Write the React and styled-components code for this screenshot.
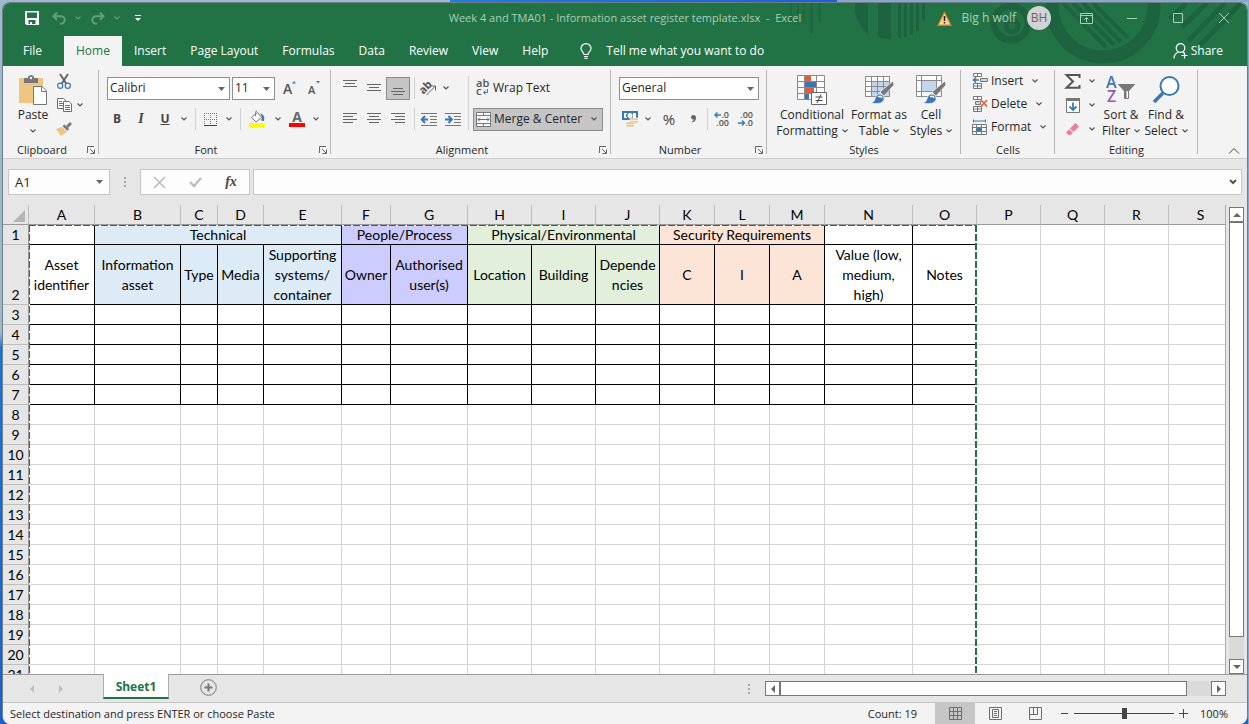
import React, { useState } from 'react'
import styled, { createGlobalStyle, css } from 'styled-components'

const GREEN = '#217346'
const GREY = '#6d6d6d'
const BLUE = '#3a78b5'

const GlobalStyle = createGlobalStyle`
  * {
    box-sizing: border-box;
  }
  body {
    margin: 0;
    font: 12px/16px 'Open Sans', 'Noto Sans', sans-serif;
    color: #262626;
  }
  button, input, select {
    font: inherit;
    color: inherit;
    margin: 0;
    padding: 0;
    border: 0;
    background: none;
    border-radius: 0;
  }
  svg {
    display: block;
    flex: none;
    overflow: visible;
  }
`

const Desktop = styled.div`
  height: 100vh;
  padding: 2px 1px 0 2px;
  background:
    linear-gradient(90deg, #9bb9d1 36%, #1e7be0 36%, #1a5fd8 67%, #86a9cb 67%) top /
      100% 2px no-repeat,
    linear-gradient(#7fa9cf, #7fa9cf) right / 1px 100% no-repeat,
    linear-gradient(#9bb9d1, #9bb9d1 46%, #1673de 48%, #1a5fd0);
`

const Window = styled.div`
  height: 100%;
  display: flex;
  flex-direction: column;
  border: 1px solid #6f7f80;
  border-bottom: 0;
  border-radius: 8px;
  overflow: hidden;
  background: #e6e6e6;
`

/* title bar */

const Header = styled.header`
  position: relative;
  overflow: hidden;
  background: ${GREEN};
  color: #fff;
`

const Pattern = styled.svg`
  position: absolute;
  top: 0;
  right: 0;
`

const TitleBar = styled.div`
  position: relative;
  display: grid;
  grid-template-columns: 1fr auto 1fr;
  align-items: center;
  height: 33px;
  padding-bottom: 3px;
  color: #a8d0b8;
`

const QuickAccess = styled.div`
  display: flex;
  align-items: center;
  padding-left: 16px;
`

const QuickButton = styled.button`
  display: flex;
  align-items: center;
  justify-content: center;
  width: ${(p) => p.$w}px;
  height: 24px;
  opacity: ${(p) => (p.disabled ? 0.3 : 1)};
  color: #fff;
`

const Title = styled.div`
  font-size: 11px;
  white-space: pre;
`

const Account = styled.div`
  display: flex;
  align-items: center;
  justify-content: flex-end;
`

const UserName = styled.span`
  margin: 0 11px 0 10px;
`

const Avatar = styled.span`
  width: 24px;
  height: 24px;
  margin-right: 12px;
  border-radius: 50%;
  background: #d3d3d3;
  color: #666;
  line-height: 24px;
  text-align: center;
`

const WindowButton = styled.button`
  display: flex;
  align-items: center;
  justify-content: center;
  width: 46px;
  height: 28px;
`

const TabBar = styled.nav`
  position: relative;
  display: flex;
  align-items: center;
  height: 30px;
  padding: 0 24px 0 6px;
`

const Tab = styled.button`
  height: 30px;
  padding: 0 12px;
  ${(p) =>
    p.$active &&
    css`
      background: #f3f3f3;
      color: ${GREEN};
    `}
  &:first-child {
    padding: 0 22px 0 14px;
  }
`

const TellMe = styled.button`
  display: flex;
  align-items: center;
  gap: 14px;
  margin-left: 20px;
`

const Share = styled.button`
  display: flex;
  align-items: center;
  gap: 3px;
  margin-left: auto;
`

/* ribbon */

const Ribbon = styled.div`
  display: flex;
  flex: none;
  height: 93px;
  background: #f3f3f3;
  border-bottom: 1px solid #cfcfcf;
`

const GroupBox = styled.section`
  display: flex;
  flex-direction: column;
  width: ${(p) => p.$w}px;
  background: linear-gradient(#b5b5b5, #b5b5b5) no-repeat right 4px / 1px
    calc(100% - 8px);
`

const GroupBody = styled.div`
  display: flex;
  flex: 1;
  padding: 0 ${(p) => p.$pad || 6}px;
`

const GroupFooter = styled.div`
  position: relative;
  padding-right: ${(p) => (p.$launcher ? 18 : 0)}px;
  font-size: 11px;
  text-align: center;
`

const Launcher = styled.button`
  position: absolute;
  right: 4px;
  top: 4px;
`

const Rows = styled.div`
  display: flex;
  flex-direction: column;
  gap: 7px;
  padding-top: 10px;
`

const Row = styled.div`
  display: flex;
  align-items: center;
  height: 24px;
  gap: ${(p) => p.$gap || 0}px;
  padding-left: ${(p) => p.$pad || 0}px;
`

const Stack = styled.div`
  display: flex;
  flex-direction: column;
  padding-top: 3px;
`

const ToolButton = styled.button`
  display: flex;
  align-items: center;
  justify-content: center;
  width: ${(p) => p.$w || 24}px;
  height: 23px;
  color: #444;
  ${(p) =>
    p.$active &&
    css`
      background: #c5c5c5;
      border: 1px solid #8c8c8c;
    `}
`

const Glyph = styled.span`
  font: ${(p) => p.$style || 'normal'} ${(p) => p.$weight || 700}
    ${(p) => p.$size || 12}px/16px ${(p) => p.$family || "'Open Sans'"}, sans-serif;
  text-decoration: ${(p) => (p.$underline ? 'underline' : 'none')};
`

const LabelButton = styled.button`
  display: flex;
  align-items: center;
  gap: 3px;
  height: 23px;
  padding: 0 2px;
  white-space: nowrap;
  ${(p) =>
    p.$active &&
    css`
      background: #c5c5c5;
      border: 1px solid #8c8c8c;
    `}
  ${(p) => p.$w && `width: ${p.$w}px;`}
  svg:last-child:not(:first-child) {
    margin-left: ${(p) => (p.$w ? 'auto' : '6px')};
    margin-right: ${(p) => (p.$w ? '3px' : '0')};
  }
`

const BigButton = styled.button`
  display: flex;
  flex-direction: column;
  align-items: center;
  width: ${(p) => p.$w}px;
  padding-top: 7px;
  white-space: nowrap;
`

const BigIcon = styled.span`
  display: flex;
  align-items: center;
  height: 34px;
`

const BigLine = styled.span`
  display: flex;
  align-items: center;
  gap: 4px;
  height: 16px;
`

const Separator = styled.span`
  flex: none;
  width: 1px;
  height: ${(p) => (p.$tall ? 54 : 22)}px;
  margin: ${(p) => (p.$tall ? '10px 4px 0 3px' : '0 2px 0 4px')};
  background: #d0d0d0;
`

const SelectBox = styled.span`
  position: relative;
  display: flex;
  width: ${(p) => p.$w}px;
  height: 23px;
  border: 1px solid #8f8f8f;
  background: #fff;
  select {
    width: 100%;
    padding: 0 16px 0 2px;
    appearance: none;
    outline: 0;
  }
  svg {
    position: absolute;
    right: 4px;
    top: 9px;
    pointer-events: none;
  }
`

const Collapse = styled.button`
  align-self: flex-end;
  margin-left: auto;
  padding: 4px 8px;
`

/* formula bar */

const FormulaBar = styled.div`
  display: flex;
  flex: none;
  align-items: center;
  height: 46px;
  padding: 0 5px;
`

const Field = styled.div`
  display: flex;
  align-items: center;
  justify-content: space-between;
  height: 26px;
  border: 1px solid #c6c6c6;
  background: #fdfdfd;
  ${(p) => (p.$w ? `width: ${p.$w}px;` : 'flex: 1; margin-left: 3px;')}
  padding: ${(p) => p.$padding || '0 6px'};
  input {
    flex: 1;
    min-width: 0;
    outline: 0;
    font-size: 13px;
  }
`

const Dots = styled.span`
  display: flex;
  flex-direction: column;
  align-items: center;
  justify-content: center;
  gap: 2px;
  width: ${(p) => p.$w}px;
  i {
    width: 2px;
    height: 2px;
    background: #a8a8a8;
  }
`

/* sheet */

const SheetArea = styled.main`
  display: flex;
  flex: 1;
  min-height: 0;
`

const Viewport = styled.div`
  position: relative;
  flex: 1;
  min-width: 0;
  overflow: hidden;
  border-right: 1px solid #ababab;
`

const Table = styled.table`
  width: 100%;
  table-layout: fixed;
  border-collapse: separate;
  border-spacing: 0;
  background: #fff;
  font: 14px/20px Lato, 'Open Sans', sans-serif;
  color: #000;
`

const HeadCell = styled.th`
  height: 20px;
  padding: 0;
  background: #e6e6e6;
  border-right: 1px solid #bdbdbd;
  border-bottom: 1px solid #999;
  font-weight: 400;
  line-height: 18px;
`

const Corner = styled(HeadCell)`
  svg {
    margin: 3px 0 0 10px;
  }
`

const RowHead = styled.th`
  height: ${(p) => p.$h}px;
  padding: 0;
  background: #e6e6e6;
  border-right: 1px solid #999;
  border-bottom: 1px solid #bdbdbd;
  font-weight: 400;
  line-height: 18px;
  vertical-align: bottom;
`

const Cell = styled.td`
  padding: 0;
  border-right: 1px solid ${(p) => (p.$boxed ? '#000' : '#d4d4d4')};
  border-bottom: 1px solid ${(p) => (p.$boxed ? '#000' : '#d4d4d4')};
  background: ${(p) => p.$fill || '#fff'};
  text-align: center;
  vertical-align: middle;
  white-space: pre;
  line-height: 18px;
`

/* three lines and the border have to share a 60px row */
const Wrapped = styled.div`
  margin-bottom: -1px;
  line-height: 20px;
`

/* copied range outline, drawn over the grid */
const Marquee = styled.div`
  position: absolute;
  left: 26px;
  top: 20px;
  bottom: 0;
  width: ${(p) => p.$w}px;
  pointer-events: none;
  background:
    repeating-linear-gradient(90deg, ${GREEN} 0 7px, #fff 7px 9px) 0 0 / 100% 1px
      no-repeat,
    repeating-linear-gradient(${GREEN} 0 7px, #fff 7px 9px) 0 0 / 1px 100% no-repeat,
    repeating-linear-gradient(${GREEN} 0 7px, #fff 7px 9px) 100% 0 / 2px 100%
      no-repeat;
`

const VScroll = styled.div`
  display: flex;
  flex-direction: column;
  flex: none;
  width: 21px;
  padding: 2px 3px 0;
`

const ScrollButton = styled.button`
  display: flex;
  flex: none;
  align-items: center;
  justify-content: center;
  width: 15px;
  height: 15px;
  border: 1px solid #777;
  background: #fff;
`

const VTrack = styled.div`
  flex: 1;
  width: 15px;
  padding-bottom: 22px;
  background: #dadada;
`

const HTrack = styled.div`
  flex: 1;
  padding-right: 24px;
  background: #dadada;
`

const Thumb = styled.div`
  height: 100%;
  border: 1px solid #777;
  background: #fff;
`

/* sheet tabs and status bar */

const SheetBar = styled.div`
  display: flex;
  flex: none;
  height: 28px;
  padding-right: 21px;
  border-top: 1px solid #999;
`

const SheetNav = styled.div`
  display: flex;
  align-items: center;
  justify-content: space-between;
  width: 100px;
  padding: 0 38px 0 25px;
`

const SheetTab = styled.button`
  width: 66px;
  height: 25px;
  margin-top: -1px;
  padding-top: 2px;
  background: #fff;
  border: solid #ababab;
  border-width: 0 1px;
  border-bottom: 2px solid ${GREEN};
  color: ${GREEN};
  font-weight: 700;
`

const AddSheet = styled.button`
  margin-left: 31px;
  padding-bottom: 2px;
`

const HScroll = styled.div`
  display: flex;
  align-items: stretch;
  width: 461px;
  height: 15px;
  margin-top: 6px;
`

const SheetSpacer = styled.div`
  flex: 1;
`

const StatusBar = styled.footer`
  display: flex;
  flex: none;
  align-items: center;
  height: 22px;
  padding: 0 19px 0 7px;
  border-top: 1px solid #c6c6c6;
  background: #f3f3f3;
  font-size: 11px;
`

const Count = styled.span`
  margin: 0 18px 0 auto;
`

const ViewButton = styled.button`
  display: flex;
  align-items: center;
  justify-content: center;
  width: 40px;
  height: 21px;
  background: ${(p) => (p.$active ? '#c6c6c6' : 'none')};
`

const ZoomSlider = styled.input`
  appearance: none;
  width: 100px;
  height: 12px;
  margin: 0 5px;
  background: linear-gradient(#444, #444) no-repeat center / 100% 1px;
  &::-webkit-slider-thumb {
    appearance: none;
    width: 5px;
    height: 11px;
    background: #444;
  }
`

const ZoomControl = styled.div`
  display: flex;
  align-items: center;
  gap: 0;
  margin: 0 12px 0 5px;
`

const ZoomButton = styled.button`
  display: flex;
  align-items: center;
  height: 16px;
`

/* icons */

const Svg = ({ w = 16, h = w, children, ...rest }) => (
  <svg
    width={w}
    height={h}
    viewBox={`0 0 ${w} ${h}`}
    fill="none"
    stroke="currentColor"
    aria-hidden="true"
    {...rest}
  >
    {children}
  </svg>
)

const Chevron = ({ color = '#555' }) => (
  <Svg w={6} h={4} stroke={color}>
    <path d="M.5 .5L3 3L5.5 .5" strokeWidth="1.2" />
  </Svg>
)

const Caret = () => (
  <Svg w={7} h={4} stroke="none">
    <path d="M0 0H7L3.5 4Z" fill="#666" />
  </Svg>
)

const Arrow = ({ dir, color = '#666' }) => {
  const turn = { up: 180, down: 0, left: 90, right: 270 }[dir]
  return (
    <Svg w={8} h={8} stroke="none">
      <path d="M0 2H8L4 6Z" fill={color} transform={`rotate(${turn} 4 4)`} />
    </Svg>
  )
}

const SaveIcon = () => (
  <Svg w={14} stroke="none">
    <path
      fill="#fff"
      fillRule="evenodd"
      d="M0 0H14V14H1.500L0 12.500ZM2 1.500V7H12V1.500ZM3.500 9V13H5V11H7V13H10.500V9Z"
    />
  </Svg>
)

const UndoIcon = ({ flip }) => (
  <Svg w={14} h={13} strokeWidth="2" transform={flip ? 'scale(-1 1)' : undefined}>
    <path d="M5 .8L1.500 4.300L5 7.800M1.500 4.300H8.500C14.500 4.300 14 11.800 8 11.800" />
  </Svg>
)

const CustomizeIcon = () => (
  <Svg w={6} h={7} stroke="none" fill="#fff">
    <path d="M0 0H6V1H0ZM0 3H6L3 6Z" />
  </Svg>
)

const WarningIcon = () => (
  <Svg w={15} h={15} stroke="none">
    <path d="M7.500 0L15 15H0Z" fill="#e07b1f" />
    <path d="M7.500 2.500L13 13.500H2Z" fill="#fbd79a" />
    <path d="M6.700 5H8.300V10H6.700ZM6.700 11H8.300V12.500H6.700Z" fill="#222" />
  </Svg>
)

const RibbonDisplayIcon = () => (
  <Svg w={13} h={11}>
    <path d="M.5 .5H12.500V10.500H.5ZM.5 2.500H12.500M6.500 9V4.500M4.500 6.500L6.500 4.500L8.500 6.500" />
  </Svg>
)

const BulbIcon = () => (
  <Svg w={12} h={16} strokeWidth="1.200">
    <path d="M4 11.500C4 9 1 8.500 1 5.500A5 4.900 0 0 1 11 5.500C11 8.500 8 9 8 11.500ZM4 13.500H8M4.500 15.400H7.500" />
  </Svg>
)

const ShareIcon = () => (
  <Svg w={15} h={16} strokeWidth="1.200">
    <circle cx="7.500" cy="5" r="4.300" />
    <path d="M1 15.500C1 11.500 3 10 5.500 9M9.500 9L11 10M11.500 9.500V15.500M8.500 12.500H14.500" />
  </Svg>
)

const PasteIcon = () => (
  <Svg w={28} h={30} stroke="none">
    <path d="M0 3H24V28H0Z" fill="#eec681" />
    <path d="M5 3H9V1.500Q12 -1.500 15 1.500V3H19V8H5Z" fill="#777" />
    <circle cx="12" cy="3" r="1.200" fill="#f3f3f3" />
    <path d="M14.500 11.500H23L27.500 16V29.500H14.500Z" fill="#fff" stroke="#777" />
    <path d="M22.500 11.500V16.500H27.500" stroke="#777" />
  </Svg>
)

const CutIcon = () => (
  <Svg w={14} h={15}>
    <path d="M3 0L9.500 10M11 0L4.500 10" stroke="#666" strokeWidth="2" />
    <circle cx="3.200" cy="11.800" r="2.600" stroke={BLUE} strokeWidth="1.200" />
    <circle cx="10.800" cy="11.800" r="2.600" stroke={BLUE} strokeWidth="1.200" />
  </Svg>
)

const CopyIcon = () => (
  <Svg w={15} h={14} stroke={GREY}>
    <path d="M.5 .5H6.500L9 3V10.500H.5Z" fill="#fff" />
    <path d="M2 3.500H5M2 5.500H6M2 7.500H6" stroke={BLUE} />
    <path d="M6.500 3.500H12L14.500 6V13.500H6.500Z" fill="#fff" />
    <path d="M8 7.500H13M8 9.500H13M8 11.500H13" stroke={BLUE} />
  </Svg>
)

const PainterIcon = () => (
  <Svg w={16} h={14} stroke="none">
    <path d="M0 7L6 5L11 10L5 14Z" fill="#eec681" />
    <path d="M6.500 4L8.500 2.500L13 7L11.500 9Z" fill="#777" />
    <path d="M10 4L14 0L16 2L12 6Z" fill="#777" />
  </Svg>
)

const GrowIcon = ({ small }) => (
  <Svg w={14} h={15} stroke="none">
    <text
      x={small ? 1 : 0}
      y="13"
      fontSize={small ? 11 : 14}
      fontFamily="Open Sans"
      fontWeight="600"
      fill="#555"
    >
      A
    </text>
    <path d={small ? 'M9 0H13L11 2.500Z' : 'M9 2.500L11 0L13 2.500Z'} fill={BLUE} />
  </Svg>
)

const BorderIcon = () => (
  <Svg w={13} h={13} stroke="#777">
    <path
      d="M.5 0V12M6.500 0V12M12.500 0V12M0 .5H13M0 6.500H13"
      strokeDasharray="1 1"
    />
    <path d="M0 12.500H13" stroke="#444" />
  </Svg>
)

const FillIcon = () => (
  <Svg w={16} h={16}>
    <path d="M2.500 6.500L8.500 1.500L12.500 6.500L7 11Z" fill="#fff" stroke="#777" />
    <path d="M6.500 5V1.500Q6.500 0 8 0" stroke="#777" />
    <path d="M11 2.500Q16.500 3.500 15 10L12 9.500Q14 6 11 2.500Z" fill={BLUE} stroke="none" />
    <path d="M0 12H16V16H0Z" fill="#ff0" stroke="none" />
  </Svg>
)

const FontColorIcon = () => (
  <Svg w={16} h={16} stroke="none">
    <text
      x="8"
      y="11"
      textAnchor="middle"
      fontSize="14"
      fontWeight="700"
      fontFamily="Open Sans"
      fill="#666"
    >
      A
    </text>
    <path d="M0 12H16V16H0Z" fill="#f00" />
  </Svg>
)

const LINES = {
  top: 'M0 .5H14M2 3.500H12M0 6.500H14',
  middle: 'M0 4.500H14M2 7.500H12M0 10.500H14',
  bottom: 'M2 8.500H12M0 11.500H14M2 14.500H12',
  left: 'M0 2.500H14M0 5.500H10M0 8.500H14M0 11.500H10',
  center: 'M0 2.500H14M2 5.500H12M0 8.500H14M2 11.500H12',
  right: 'M0 2.500H14M4 5.500H14M0 8.500H14M4 11.500H14',
}

const LinesIcon = ({ kind }) => (
  <Svg w={14} h={16} stroke="#666">
    <path d={LINES[kind]} />
  </Svg>
)

const IndentIcon = ({ out }) => (
  <Svg w={16} h={13} stroke="#777">
    <path d="M0 .5H16M9 3.500H16M9 6.500H16M9 9.500H16M0 12.500H16" />
    <path
      d={out ? 'M7 6.500H1M4 3L.8 6.500L4 10' : 'M0 6.500H6M3.500 3L6.800 6.500L3.500 10'}
      stroke={BLUE}
      strokeWidth="2"
    />
  </Svg>
)

const OrientationIcon = () => (
  <Svg w={16} h={16} stroke="#666">
    <text
      x="0"
      y="11"
      fontSize="11"
      fontFamily="Open Sans"
      fontWeight="700"
      fill="#555"
      stroke="none"
      transform="rotate(-45 6 9)"
    >
      ab
    </text>
    <path d="M6.500 15L15 6.500M11 6H15.500V10.500" />
  </Svg>
)

const WrapIcon = () => (
  <Svg w={15} h={16} stroke="none">
    <g fontSize="11" fontFamily="Open Sans" fontWeight="600" fill="#555">
      <text x="1" y="7">
        ab
      </text>
      <text x="1" y="15">
        c
      </text>
    </g>
    <path d="M12.500 9V12.500H8.500M10.500 10.500L8.500 12.500L10.500 14.500" stroke={BLUE} />
  </Svg>
)

const MergeIcon = () => (
  <Svg w={15} h={15} stroke="#777">
    <path d="M.5 .5H14.500V14.500H.5Z" fill="#fff" />
    <path d="M0 3.500H15M0 11.500H15M7.500 0V3M7.500 12V15" />
    <path d="M2 7.500H13M4 5.500L2 7.500L4 9.500M11 5.500L13 7.500L11 9.500" stroke={BLUE} />
  </Svg>
)

const CurrencyIcon = () => (
  <Svg w={16} h={16} stroke="none">
    <path d="M0 0H16V9H0Z" fill={BLUE} />
    <path d="M2 2H5V3H4V6H5V7H2ZM11 2H14V7H11Z" fill="#fff" />
    <circle cx="8" cy="4.500" r="2.500" fill="#fff" />
    <g fill="#eec681" stroke="#f3f3f3" strokeWidth=".6">
      <path d="M8 7H16V9.500H8ZM8 9.500H16V12H8Z" />
      <path d="M4 11H12V13.500H4ZM4 13.500H12V16H4Z" />
    </g>
  </Svg>
)

const CommaIcon = () => (
  <Svg w={5} h={8} stroke="none">
    <path d="M2.300 0Q5 0 5 3Q5 6.500 1.200 7.500L.8 6.500Q2.500 5.800 2.800 4.500Q0 4.800 0 2.300Q.2 0 2.300 0Z" fill="#666" />
  </Svg>
)

const DecimalIcon = ({ less }) => (
  <Svg w={16} h={16} stroke="none">
    <g fontSize="9" fontFamily="Open Sans" fontWeight="600" fill="#555">
      <text x="15" y="7" textAnchor="end">
        {less ? '.00' : '.0'}
      </text>
      <text x="15" y="15" textAnchor="end">
        {less ? '.0' : '.00'}
      </text>
    </g>
    <path
      d={less ? 'M0 12H6M4 9.500L6.500 12L4 14.500' : 'M7 4H1M3.500 1.500L1 4L3.500 6.500'}
      stroke={BLUE}
      strokeWidth="1.400"
    />
  </Svg>
)

const ConditionalIcon = () => (
  <Svg w={30} h={30} stroke="#8a8a8a">
    <path d="M.5 .5H27.500V24.500H.5Z" fill="#fff" />
    <path d="M8 1H14V6H8ZM8 13H17V18H8Z" fill="#d9603b" stroke="none" />
    <path d="M8 7H19V12H8ZM8 19H12V24H8Z" fill={BLUE} stroke="none" />
    <path d="M7.500 0V24M19.500 0V24M0 6.500H28M0 12.500H28M0 18.500H28" />
    <path d="M14.500 17.500H29.500V29.500H14.500Z" fill="#fff" stroke="#666" />
    <path d="M18.500 22H25.500M18.500 25.500H25.500M24 19.500L20 28" stroke="#444" />
  </Svg>
)

const BrushPath = () => (
  <>
    <path d="M29 6L30 10L20 21L16 17Z" fill="#777" stroke="#f3f3f3" strokeWidth=".8" />
    <path d="M7 28Q11 27 11.500 22Q14 17 19 20Q22 25 17 28Q12 29.500 7 28Z" fill={BLUE} stroke="#f3f3f3" strokeWidth=".8" />
    <path d="M14 22Q17 20 18 23" stroke="#fff" strokeWidth="1.500" />
  </>
)

const TableIcon = () => (
  <Svg w={30} h={30} stroke="#8a8a8a">
    <path d="M1.500 1.500H25.500V21.500H1.500Z" fill="#fff" />
    <path d="M7 6H26V22H7Z" fill="#c3d5ec" stroke="none" />
    <path d="M1.500 1.500H25.500V21.500H1.500ZM7.500 1V22M13.500 1V22M19.500 1V22M1 6.500H26M1 11.500H26M1 16.500H26" />
    <BrushPath />
  </Svg>
)

const CellStyleIcon = () => (
  <Svg w={30} h={30} stroke="#8a8a8a">
    <path d="M.5 .5H25.500V21.500H.5Z" fill="#fff" />
    <path d="M5 5H20V16H5Z" fill="#c3d5ec" stroke="none" />
    <path d="M5.500 0V22M20.500 0V22M0 5.500H26M0 16.500H26" />
    <BrushPath />
  </Svg>
)

const InsertIcon = () => (
  <Svg w={16} h={16} stroke="#777">
    <path d="M1.500 .5H9.500V3.500H1.500ZM5.500 .5V3.500M1.500 10.500H9.500V15.500H1.500ZM5.500 10.500V15.500M1.500 13H9.500" fill="#fff" />
    <path d="M8.500 5.500H15.500V8.500H8.500Z" fill="#c3d5ec" />
    <path d="M7 7H1.500M4 4.500L1.500 7L4 9.500" stroke={BLUE} strokeWidth="1.600" />
  </Svg>
)

const DeleteIcon = () => (
  <Svg w={16} h={16} stroke="#777">
    <path d="M1.500 .5H9.500V3.500H1.500ZM5.500 .5V3.500M1.500 10.500H9.500V15.500H1.500ZM5.500 10.500V15.500M1.500 13H9.500" fill="#fff" />
    <path d="M3.500 5.500H8.500V8.500H3.500Z" fill="#c3d5ec" />
    <path d="M9 4L15 10.500M15 4L9 10.500" stroke="#d9603b" strokeWidth="1.600" />
  </Svg>
)

const FormatIcon = () => (
  <Svg w={16} h={16} stroke="#777">
    <path d="M1.500 .5V3.500M13.500 .5V3.500M2 2H13" stroke={BLUE} />
    <path d="M.5 5.500H14.500V15.500H.5ZM4.500 5V16M9.500 5V16M0 8.500H15M0 12.500H15" fill="#fff" />
    <path d="M5 9H9V12H5Z" fill={BLUE} stroke="none" />
  </Svg>
)

const SigmaIcon = () => (
  <Svg w={16} h={15} stroke="#555" strokeWidth="2">
    <path d="M14.500 4V1H1.500L8 7.500L1.500 13.800H14.500V11" />
  </Svg>
)

const FillDownIcon = () => (
  <Svg w={14} h={15} stroke="#777">
    <path d="M.5 .5H13.500V14.500H.5Z" fill="#fff" />
    <path d="M0 0H14V3H0Z" fill="#777" stroke="none" />
    <path d="M7 4.500V12M3.500 8.500L7 12L10.500 8.500" stroke={BLUE} strokeWidth="1.800" />
  </Svg>
)

const EraserIcon = () => (
  <Svg w={14} h={13} stroke="none">
    <path d="M9.500 0L13 3.500L7.500 9L4 5.500Z" fill="#e8829a" />
    <path d="M3.300 6.200L6.800 9.700L4.500 12H2.500L.5 10V9Z" fill="#e8829a" />
  </Svg>
)

const SortIcon = () => (
  <Svg w={30} h={30} stroke="none">
    <g fontFamily="Open Sans" fontSize="16" fontWeight="600">
      <text x="0" y="13" fill={BLUE}>
        A
      </text>
      <text x="1" y="27" fill="#9459ba">
        Z
      </text>
    </g>
    <path d="M12.500 9.500H28.500L22.500 16V23.500H18.500V16Z" fill="#fff" stroke="#777" />
    <path d="M12 9H29L22.500 16H20.500V23H18.500V16Z" fill="#777" />
  </Svg>
)

const FindIcon = () => (
  <Svg w={28} h={28} stroke={BLUE}>
    <circle cx="17.500" cy="10" r="9" fill="#fff" strokeWidth="2" />
    <path d="M11 17L2 26" strokeWidth="3.500" />
  </Svg>
)

const LauncherIcon = () => (
  <Svg w={8} h={8} stroke="#666">
    <path d="M.5 7V.5H7M3 3L7 7M7.500 3.500V7.500H3.500" />
  </Svg>
)

/* ribbon parts */

const Group = ({ label, width, pad, launcher, children }) => (
  <GroupBox $w={width} aria-label={label}>
    <GroupBody $pad={pad}>{children}</GroupBody>
    <GroupFooter $launcher={launcher}>
      {label}
      {launcher && (
        <Launcher aria-label={`${label} settings`}>
          <LauncherIcon />
        </Launcher>
      )}
    </GroupFooter>
  </GroupBox>
)

const DropButton = ({ label }) => (
  <ToolButton $w={14} aria-label={`${label} options`}>
    <Chevron />
  </ToolButton>
)

const Tool = ({ label, children, drop, ...rest }) => (
  <>
    <ToolButton aria-label={label} {...rest}>
      {children}
    </ToolButton>
    {drop && <DropButton label={label} />}
  </>
)

const Combo = ({ label, width, options }) => (
  <SelectBox $w={width}>
    <select aria-label={label}>
      {options.map((o) => (
        <option key={o}>{o}</option>
      ))}
    </select>
    <Caret />
  </SelectBox>
)

const Big = ({ icon, width, first, second }) => (
  <BigButton $w={width}>
    <BigIcon>{icon}</BigIcon>
    <BigLine>{first}</BigLine>
    <BigLine>
      {second}
      <Chevron />
    </BigLine>
  </BigButton>
)

/* data */

const TABS = [
  'File',
  'Home',
  'Insert',
  'Page Layout',
  'Formulas',
  'Data',
  'Review',
  'View',
  'Help',
]

const COLUMNS = [
  ['A', 66],
  ['B', 86],
  ['C', 37],
  ['D', 46],
  ['E', 78],
  ['F', 49],
  ['G', 77],
  ['H', 64],
  ['I', 64],
  ['J', 64],
  ['K', 55],
  ['L', 55],
  ['M', 55],
  ['N', 88],
  ['O', 64],
  ['P', 64],
  ['Q', 64],
  ['R', 64],
  ['S', 64],
]

const BOXED_COLUMNS = 15
const BOXED_WIDTH = COLUMNS.slice(0, BOXED_COLUMNS).reduce((sum, c) => sum + c[1], 0)

const FILLS = {
  technical: '#ddebf7',
  people: '#ccccff',
  physical: '#e2efda',
  security: '#fce4d6',
}

const SECTIONS = [
  { text: '', span: 1 },
  { text: 'Technical', span: 4, fill: FILLS.technical },
  { text: 'People/Process', span: 2, fill: FILLS.people },
  { text: 'Physical/Environmental', span: 3, fill: FILLS.physical },
  { text: 'Security Requirements', span: 3, fill: FILLS.security },
  { text: '', span: 1 },
  { text: '', span: 1 },
]

const FIELDS = [
  ['Asset\nidentifier'],
  ['Information\nasset', FILLS.technical],
  ['Type', FILLS.technical],
  ['Media', FILLS.technical],
  ['Supporting\nsystems/\ncontainer', FILLS.technical],
  ['Owner', FILLS.people],
  ['Authorised\nuser(s)', FILLS.people],
  ['Location', FILLS.physical],
  ['Building', FILLS.physical],
  ['Depende\nncies', FILLS.physical],
  ['C', FILLS.security],
  ['I', FILLS.security],
  ['A', FILLS.security],
  ['Value (low,\nmedium,\nhigh)'],
  ['Notes'],
]

const EMPTY_ROWS = Array.from({ length: 19 }, (_, i) => i + 3)
const REST = COLUMNS.slice(BOXED_COLUMNS)

function Sheet() {
  return (
    <Viewport>
      <Table>
        <colgroup>
          <col style={{ width: 26 }} />
          {COLUMNS.map(([name, width]) => (
            <col key={name} style={{ width }} />
          ))}
        </colgroup>
        <thead>
          <tr>
            <Corner aria-label="Select all">
              <Svg w={12} h={12} stroke="none">
                <path d="M12 0V12H0Z" fill="#b4b4b4" />
              </Svg>
            </Corner>
            {COLUMNS.map(([name]) => (
              <HeadCell key={name} scope="col">
                {name}
              </HeadCell>
            ))}
          </tr>
        </thead>
        <tbody>
          <tr>
            <RowHead $h={20}>1</RowHead>
            {SECTIONS.map((s, i) => (
              <Cell key={i} colSpan={s.span} $fill={s.fill} $boxed>
                {s.text}
              </Cell>
            ))}
            {REST.map(([name]) => (
              <Cell key={name} />
            ))}
          </tr>
          <tr>
            <RowHead $h={60}>2</RowHead>
            {FIELDS.map(([text, fill]) => (
              <Cell key={text} $fill={fill} $boxed>
                <Wrapped>{text}</Wrapped>
              </Cell>
            ))}
            {REST.map(([name]) => (
              <Cell key={name} />
            ))}
          </tr>
          {EMPTY_ROWS.map((n) => (
            <tr key={n}>
              <RowHead $h={20}>{n}</RowHead>
              {COLUMNS.map(([name], i) => (
                <Cell key={name} $boxed={n <= 7 && i < BOXED_COLUMNS} />
              ))}
            </tr>
          ))}
        </tbody>
      </Table>
      <Marquee $w={BOXED_WIDTH} />
    </Viewport>
  )
}

function AppHeader() {
  const [tab, setTab] = useState('Home')

  return (
    <Header>
      <Pattern width="460" height="63" viewBox="-63 0 460 63" aria-hidden="true">
        <g fill="#1f6841">
          <path d="M-60 0H-58V19H-60ZM-53 0H-51V22H-53ZM-47 0H-45V20H-47ZM-40 0H-37V31H-40ZM-32 0H-29V19H-32ZM-12 0H-11V8Z" />
        </g>
        <g fill="#1e633f">
          <path d="M5 0H18V32Q10 24 5 10ZM28 0H41V36Q34 36 28 34Z" />
          <path d="M48 0H51V35H48ZM54 0H57V34H54ZM60 0H63V32H60ZM66 0H69V28H66ZM72 0H75V18H72Z" />
        </g>
        <g fill="none" stroke="#1e633f">
          <circle cx="161" cy="20" r="17" strokeWidth="7" />
          <circle cx="162" cy="23" r="6" strokeWidth="5" />
          <circle cx="253" cy="3" r="51" strokeWidth="13" />
          <path
            d="M213 0L256 44M223 0L264 42M233 0L271 39M243 0L278 35"
            strokeWidth="4"
          />
          <path d="M320 16L336 0M332 24L357 0M338 38L375 0M350 42L391 0" strokeWidth="5" />
        </g>
      </Pattern>
      <TitleBar>
        <QuickAccess>
          <QuickButton $w={26} aria-label="Save">
            <SaveIcon />
          </QuickButton>
          <QuickButton $w={28} disabled aria-label="Undo">
            <UndoIcon />
          </QuickButton>
          <QuickButton $w={10} disabled aria-label="Undo history">
            <Chevron color="#fff" />
          </QuickButton>
          <QuickButton $w={29} disabled aria-label="Redo">
            <UndoIcon flip />
          </QuickButton>
          <QuickButton $w={10} disabled aria-label="Redo history">
            <Chevron color="#fff" />
          </QuickButton>
          <QuickButton $w={32} aria-label="Customize toolbar">
            <CustomizeIcon />
          </QuickButton>
        </QuickAccess>
        <Title>Week 4 and TMA01 - Information asset register template.xlsx  -  Excel</Title>
        <Account>
          <WarningIcon />
          <UserName>Big h wolf</UserName>
          <Avatar>BH</Avatar>
          <WindowButton aria-label="Ribbon display options">
            <RibbonDisplayIcon />
          </WindowButton>
          <WindowButton aria-label="Minimize">
            <Svg w={10} h={1}>
              <path d="M0 .5H10" />
            </Svg>
          </WindowButton>
          <WindowButton aria-label="Maximize">
            <Svg w={10}>
              <path d="M.5 .5H9.500V9.500H.5Z" />
            </Svg>
          </WindowButton>
          <WindowButton aria-label="Close">
            <Svg w={10}>
              <path d="M0 0L10 10M10 0L0 10" />
            </Svg>
          </WindowButton>
        </Account>
      </TitleBar>
      <TabBar>
        {TABS.map((name) => (
          <Tab key={name} $active={name === tab} onClick={() => setTab(name)}>
            {name}
          </Tab>
        ))}
        <TellMe>
          <BulbIcon />
          Tell me what you want to do
        </TellMe>
        <Share>
          <ShareIcon />
          Share
        </Share>
      </TabBar>
    </Header>
  )
}

function RibbonBar() {
  return (
    <Ribbon>
      <Group label="Clipboard" width={96} launcher pad={8}>
        <Big icon={<PasteIcon />} width={44} first="Paste" second="" />
        <Stack>
          <Row>
            <Tool label="Cut" $w={18}>
              <CutIcon />
            </Tool>
          </Row>
          <Row>
            <Tool label="Copy" $w={18} drop>
              <CopyIcon />
            </Tool>
          </Row>
          <Row>
            <Tool label="Format Painter" $w={18}>
              <PainterIcon />
            </Tool>
          </Row>
        </Stack>
      </Group>

      <Group label="Font" width={232} launcher>
        <Rows>
          <Row $pad={2}>
            <Row $gap={2}>
              <Combo label="Font" width={123} options={['Calibri', 'Arial', 'Cambria']} />
              <Combo label="Font size" width={43} options={['11', '12', '14']} />
            </Row>
            <Row $pad={3}>
              <Tool label="Increase font size">
                <GrowIcon />
              </Tool>
              <Tool label="Decrease font size">
                <GrowIcon small />
              </Tool>
            </Row>
          </Row>
          <Row>
            <Tool label="Bold">
              <Glyph>B</Glyph>
            </Tool>
            <Tool label="Italic">
              <Glyph $style="italic" $family="'Liberation Serif'" $size={14}>
                I
              </Glyph>
            </Tool>
            <Tool label="Underline" drop>
              <Glyph $underline>U</Glyph>
            </Tool>
            <Separator />
            <Tool label="Borders" drop>
              <BorderIcon />
            </Tool>
            <Separator />
            <Tool label="Fill color" $w={28} drop>
              <FillIcon />
            </Tool>
            <Tool label="Font color" drop>
              <FontColorIcon />
            </Tool>
          </Row>
        </Rows>
      </Group>

      <Group label="Alignment" width={280} launcher pad={7}>
        <Rows>
          <Row>
            <Tool label="Top align">
              <LinesIcon kind="top" />
            </Tool>
            <Tool label="Middle align">
              <LinesIcon kind="middle" />
            </Tool>
            <Tool label="Bottom align" $active>
              <LinesIcon kind="bottom" />
            </Tool>
            <Separator />
            <Tool label="Orientation" $w={22} drop>
              <OrientationIcon />
            </Tool>
          </Row>
          <Row>
            <Tool label="Align left">
              <LinesIcon kind="left" />
            </Tool>
            <Tool label="Center">
              <LinesIcon kind="center" />
            </Tool>
            <Tool label="Align right">
              <LinesIcon kind="right" />
            </Tool>
            <Separator />
            <Tool label="Decrease indent">
              <IndentIcon out />
            </Tool>
            <Tool label="Increase indent">
              <IndentIcon />
            </Tool>
          </Row>
        </Rows>
        <Separator $tall />
        <Rows>
          <Row>
            <LabelButton>
              <WrapIcon />
              Wrap Text
            </LabelButton>
          </Row>
          <Row>
            <LabelButton $w={130} $active>
              <MergeIcon />
              Merge &amp; Center
              <Chevron />
            </LabelButton>
          </Row>
        </Rows>
      </Group>

      <Group label="Number" width={156} launcher pad={8}>
        <Rows>
          <Row>
            <Combo label="Number format" width={140} options={['General', 'Number', 'Text']} />
          </Row>
          <Row>
            <Tool label="Accounting format" $w={22} drop>
              <CurrencyIcon />
            </Tool>
            <Tool label="Percent style" $w={28}>
              <Glyph $size={15} $weight={400}>
                %
              </Glyph>
            </Tool>
            <Tool label="Comma style" $w={20}>
              <CommaIcon />
            </Tool>
            <Separator />
            <Tool label="Increase decimal">
              <DecimalIcon />
            </Tool>
            <Tool label="Decrease decimal">
              <DecimalIcon less />
            </Tool>
          </Row>
        </Rows>
      </Group>

      <Group label="Styles" width={194}>
        <Big icon={<ConditionalIcon />} width={78} first="Conditional" second="Formatting" />
        <Big icon={<TableIcon />} width={56} first="Format as" second="Table" />
        <Big icon={<CellStyleIcon />} width={48} first="Cell" second="Styles" />
      </Group>

      <Group label="Cells" width={94} pad={9}>
        <Stack>
          <LabelButton>
            <InsertIcon />
            Insert
            <Chevron />
          </LabelButton>
          <LabelButton>
            <DeleteIcon />
            Delete
            <Chevron />
          </LabelButton>
          <LabelButton>
            <FormatIcon />
            Format
            <Chevron />
          </LabelButton>
        </Stack>
      </Group>

      <Group label="Editing" width={143}>
        <Stack>
          <Row>
            <Tool label="AutoSum" drop>
              <SigmaIcon />
            </Tool>
          </Row>
          <Row>
            <Tool label="Fill" drop>
              <FillDownIcon />
            </Tool>
          </Row>
          <Row>
            <Tool label="Clear" drop>
              <EraserIcon />
            </Tool>
          </Row>
        </Stack>
        <Big icon={<SortIcon />} width={44} first="Sort &amp;" second="Filter" />
        <Big icon={<FindIcon />} width={46} first="Find &amp;" second="Select" />
      </Group>

      <Collapse aria-label="Collapse the ribbon">
        <Svg w={10} h={6} stroke="#444">
          <path d="M0 5.500L5 .5L10 5.500" />
        </Svg>
      </Collapse>
    </Ribbon>
  )
}

export default function App() {
  const [zoom, setZoom] = useState(100)

  return (
    <Desktop>
      <GlobalStyle />
      <Window>
        <AppHeader />
        <RibbonBar />
        <FormulaBar>
          <Field $w={102}>
            <input aria-label="Name box" defaultValue="A1" />
            <Caret />
          </Field>
          <Dots $w={30}>
            <i />
            <i />
            <i />
          </Dots>
          <Field $w={110}>
            <ToolButton aria-label="Cancel">
              <Svg w={11} stroke="#bdbdbd" strokeWidth="1.600">
                <path d="M0 0L11 11M11 0L0 11" />
              </Svg>
            </ToolButton>
            <ToolButton aria-label="Enter">
              <Svg w={13} h={10} stroke="#bdbdbd" strokeWidth="2.400">
                <path d="M1 5L5 9L12 1" />
              </Svg>
            </ToolButton>
            <ToolButton aria-label="Insert function">
              <Glyph $style="italic" $family="'Liberation Serif'" $size={14}>
                fx
              </Glyph>
            </ToolButton>
          </Field>
          <Field $padding="0 4px">
            <input aria-label="Formula" />
            <Svg w={8} h={6} stroke="#555" strokeWidth="2">
              <path d="M1 1L4 4L7 1" />
            </Svg>
          </Field>
        </FormulaBar>
        <SheetArea>
          <Sheet />
          <VScroll>
            <ScrollButton aria-label="Scroll up">
              <Arrow dir="up" />
            </ScrollButton>
            <VTrack>
              <Thumb />
            </VTrack>
            <ScrollButton aria-label="Scroll down">
              <Arrow dir="down" />
            </ScrollButton>
          </VScroll>
        </SheetArea>
        <SheetBar>
          <SheetNav>
            <Arrow dir="left" color="#bdbdbd" />
            <Arrow dir="right" color="#bdbdbd" />
          </SheetNav>
          <SheetTab>Sheet1</SheetTab>
          <AddSheet aria-label="New sheet">
            <Svg w={17} stroke="#777">
              <circle cx="8.500" cy="8.500" r="7.800" />
              <path d="M4.500 8.500H12.500M8.500 4.500V12.500" strokeWidth="2" />
            </Svg>
          </AddSheet>
          <SheetSpacer />
          <Dots $w={32}>
            <i />
            <i />
            <i />
          </Dots>
          <HScroll>
            <ScrollButton aria-label="Scroll left">
              <Arrow dir="left" />
            </ScrollButton>
            <HTrack>
              <Thumb />
            </HTrack>
            <ScrollButton aria-label="Scroll right">
              <Arrow dir="right" />
            </ScrollButton>
          </HScroll>
        </SheetBar>
        <StatusBar>
          Select destination and press ENTER or choose Paste
          <Count>Count: 19</Count>
          <ViewButton $active aria-label="Normal view">
            <Svg w={13} stroke={GREY}>
              <path d="M.5 .5H12.500V12.500H.5ZM4.500 0V13M8.500 0V13M0 4.500H13M0 8.500H13" />
            </Svg>
          </ViewButton>
          <ViewButton aria-label="Page layout view">
            <Svg w={13} stroke={GREY}>
              <path d="M.5 .5H12.500V12.500H.5ZM3.500 2.500H9.500V10.500H3.500ZM5 4.500H8M5 6.500H8M5 8.500H8" />
            </Svg>
          </ViewButton>
          <ViewButton aria-label="Page break preview">
            <Svg w={13} stroke={GREY}>
              <path d="M.5 .5H12.500V12.500H.5ZM4.500 0V7.500M8.500 0V7.500M0 7.500H9" />
            </Svg>
          </ViewButton>
          <ZoomControl>
            <ZoomButton aria-label="Zoom out">
              <Svg w={9} stroke="#444">
                <path d="M1 4.500H8" />
              </Svg>
            </ZoomButton>
            <ZoomSlider
              type="range"
              aria-label="Zoom"
              min="10"
              max="190"
              value={zoom}
              onChange={(e) => setZoom(Number(e.target.value))}
            />
            <ZoomButton aria-label="Zoom in">
              <Svg w={9} stroke="#444">
                <path d="M0 4.500H9M4.500 0V9" />
              </Svg>
            </ZoomButton>
          </ZoomControl>
          {zoom}%
        </StatusBar>
      </Window>
    </Desktop>
  )
}
